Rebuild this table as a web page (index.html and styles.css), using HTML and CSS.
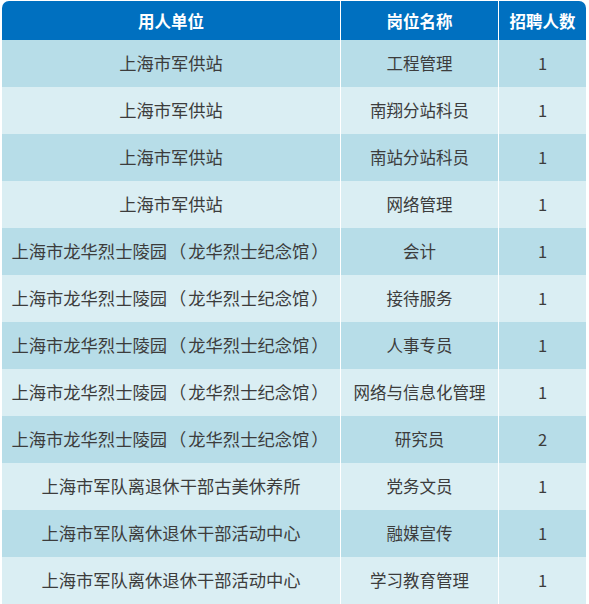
FILE: index.html
```html
<!DOCTYPE html>
<html lang="zh-CN">
<head>
<meta charset="utf-8">
<link rel="stylesheet" href="styles.css">
</head>
<body>
<table class="jobs">
  <colgroup>
    <col class="c1"><col class="c2"><col class="c3">
  </colgroup>
  <thead>
    <tr><th>用人单位</th><th>岗位名称</th><th>招聘人数</th></tr>
  </thead>
  <tbody>
    <tr><td>上海市军供站</td><td>工程管理</td><td>1</td></tr>
    <tr><td>上海市军供站</td><td>南翔分站科员</td><td>1</td></tr>
    <tr><td>上海市军供站</td><td>南站分站科员</td><td>1</td></tr>
    <tr><td>上海市军供站</td><td>网络管理</td><td>1</td></tr>
    <tr><td>上海市龙华烈士陵园<span class="pn">（</span>龙华烈士纪念馆<span class="pn">）</span></td><td>会计</td><td>1</td></tr>
    <tr><td>上海市龙华烈士陵园<span class="pn">（</span>龙华烈士纪念馆<span class="pn">）</span></td><td>接待服务</td><td>1</td></tr>
    <tr><td>上海市龙华烈士陵园<span class="pn">（</span>龙华烈士纪念馆<span class="pn">）</span></td><td>人事专员</td><td>1</td></tr>
    <tr><td>上海市龙华烈士陵园<span class="pn">（</span>龙华烈士纪念馆<span class="pn">）</span></td><td>网络与信息化管理</td><td>1</td></tr>
    <tr><td>上海市龙华烈士陵园<span class="pn">（</span>龙华烈士纪念馆<span class="pn">）</span></td><td>研究员</td><td>2</td></tr>
    <tr><td>上海市军队离退休干部古美休养所</td><td>党务文员</td><td>1</td></tr>
    <tr><td>上海市军队离休退休干部活动中心</td><td>融媒宣传</td><td>1</td></tr>
    <tr><td>上海市军队离休退休干部活动中心</td><td>学习教育管理</td><td>1</td></tr>
  </tbody>
</table>
</body>
</html>
```
FILE: styles.css
```css
html, body {
  margin: 0;
  padding: 0;
  background: #ffffff;
}
body {
  padding: 1px 0 0 2px;
  font-family: "Noto Sans CJK SC", "Noto Sans", sans-serif;
}
.jobs {
  border-collapse: separate;
  border-spacing: 0;
  width: 584px;
  table-layout: fixed;
}
.c1 { width: 338px; }
.c2 { width: 158px; }
.c3 { width: 88px; }
.jobs th {
  background: #0070c0;
  color: #ffffff;
  font-weight: bold;
  font-size: 16.5px;
  line-height: 20px;
  height: 39px;
  padding: 0;
  text-align: center;
  vertical-align: middle;
}
.jobs th:first-child { border-top-left-radius: 7px; }
.jobs th:last-child { border-top-right-radius: 7px; }
.jobs td {
  height: 47px;
  padding: 0 0 1px;
  box-sizing: border-box;
  text-align: center;
  vertical-align: middle;
  color: #3c3c3c;
  font-size: 16.5px;
  line-height: 20px;
}
.jobs td:first-child { font-size: 17.3px; }
.pn {
  font-family: "Noto Sans CJK TC", sans-serif;
  padding: 0 2px;
}
.jobs th + th,
.jobs td + td {
  border-left: 1px solid #ffffff;
}
.jobs tbody tr:nth-child(odd) td { background: #b7dde8; }
.jobs tbody tr:nth-child(even) td { background: #daeef3; }
```
